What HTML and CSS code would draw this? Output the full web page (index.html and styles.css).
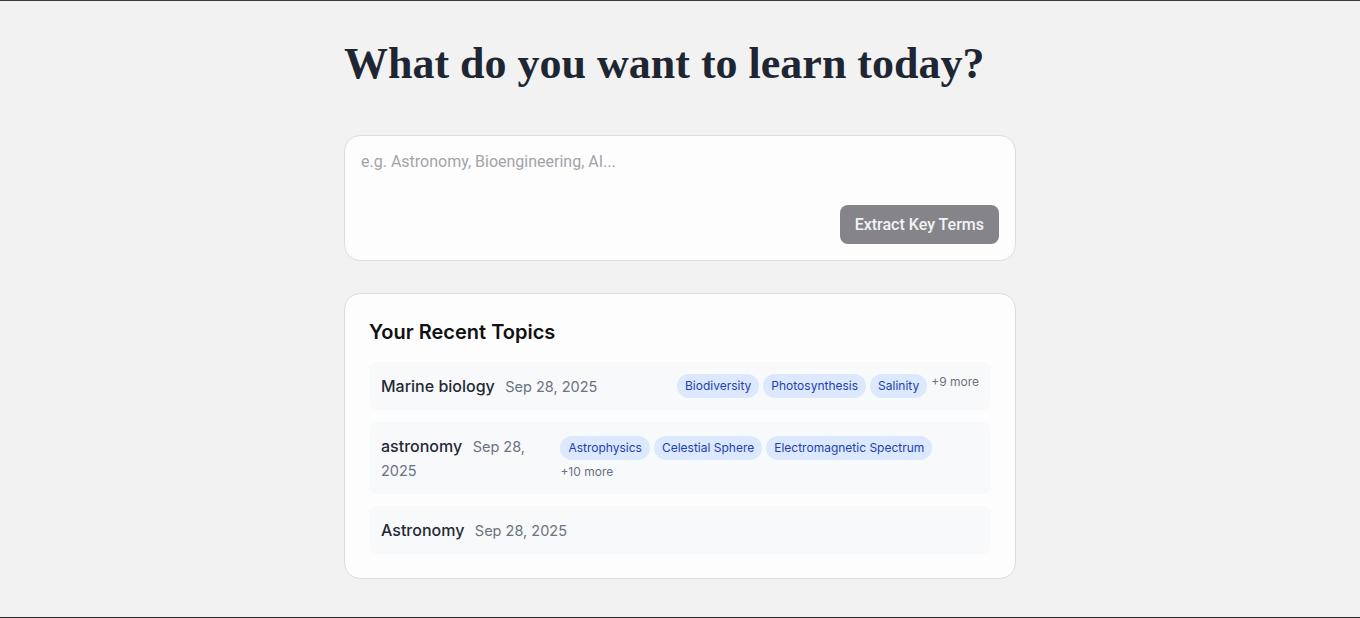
FILE: index.html
```html
<!DOCTYPE html>
<html lang="en">
<head>
    <meta charset="UTF-8">
    <meta name="viewport" content="width=device-width, initial-scale=1.0">
    <title>Learn</title>
    <link rel="stylesheet" href="styles.css">
</head>
<body>
    <main class="page">
        <h1 class="headline">What do you want to learn today?</h1>

        <div class="card search-card">
            <textarea class="topic-input" rows="2" placeholder="e.g. Astronomy, Bioengineering, AI..."></textarea>
            <div class="search-actions">
                <button type="button" class="extract-btn">Extract Key Terms</button>
            </div>
        </div>

        <section class="card recent-card">
            <h2 class="recent-title">Your Recent Topics</h2>
            <ul class="topic-list">
                <li class="topic-row">
                    <p class="topic-meta"><span class="topic-name">Marine biology</span> <span class="topic-date">Sep 28, 2025</span></p>
                    <div class="tags">
                        <span class="tag">Biodiversity</span>
                        <span class="tag">Photosynthesis</span>
                        <span class="tag">Salinity</span>
                        <span class="more">+9 more</span>
                    </div>
                </li>
                <li class="topic-row">
                    <p class="topic-meta"><span class="topic-name">astronomy</span> <span class="topic-date">Sep 28, 2025</span></p>
                    <div class="tags">
                        <span class="tag">Astrophysics</span>
                        <span class="tag">Celestial Sphere</span>
                        <span class="tag">Electromagnetic Spectrum</span>
                        <span class="more">+10 more</span>
                    </div>
                </li>
                <li class="topic-row">
                    <p class="topic-meta"><span class="topic-name">Astronomy</span> <span class="topic-date">Sep 28, 2025</span></p>
                </li>
            </ul>
        </section>
    </main>
</body>
</html>
```

FILE: styles.css
```css
* {
    box-sizing: border-box;
}

html,
body {
    margin: 0;
    padding: 0;
}

body {
    font-family: Inter, "Noto Sans", sans-serif;
    background: #f2f2f2;
    color: #1f2937;
    min-height: 100vh;
    border-top: 1px solid #3b3b3f;
    border-bottom: 1px solid #2a2a2a;
}

.page {
    width: 672px;
    margin: 0 auto;
    padding-top: 37px;
    display: flex;
    flex-direction: column;
    gap: 32px;
}

.headline {
    font-family: "Liberation Serif", "Times New Roman", serif;
    font-weight: 700;
    font-size: 44px;
    line-height: 1.2;
    color: #1f2633;
    margin: 0 0 12px;
}

.card {
    background: #fdfdfd;
    border: 1px solid #dcdcdc;
    border-radius: 16px;
}

.search-card {
    padding: 16px;
    display: flex;
    flex-direction: column;
}

.topic-input {
    border: none;
    outline: none;
    resize: none;
    background: transparent;
    font-family: Roboto, sans-serif;
    font-size: 16px;
    line-height: 20px;
    color: #374151;
    padding: 0;
    height: 53px;
}

.topic-input::placeholder {
    color: #a3a3ab;
}

.search-actions {
    display: flex;
    justify-content: flex-end;
}

.extract-btn {
    background: #858589;
    color: #f3f4f6;
    border: none;
    border-radius: 8px;
    height: 39px;
    padding: 0 15px;
    font-family: Roboto, sans-serif;
    font-size: 16px;
    font-weight: 500;
    cursor: pointer;
}

.recent-card {
    padding: 24px;
}

.recent-title {
    margin: 0 0 16px;
    font-size: 20px;
    line-height: 28px;
    font-weight: 600;
    color: #111111;
}

.topic-list {
    list-style: none;
    margin: 0;
    padding: 0;
    display: flex;
    flex-direction: column;
    gap: 12px;
}

.topic-row {
    background: #f8f9fb;
    border-radius: 8px;
    padding: 12px;
    display: flex;
    justify-content: space-between;
    align-items: center;
    gap: 16px;
}

.topic-meta {
    margin: 0;
    font-size: 16px;
    line-height: 24px;
}

.topic-name {
    font-weight: 500;
    color: #1f2937;
}

.topic-date {
    font-size: 14.5px;
    line-height: 16px;
    color: #6b7280;
    margin-left: 6px;
}

.tags {
    display: flex;
    flex-wrap: wrap;
    gap: 4px;
    flex-shrink: 0;
    max-width: 70%;
}

.tag {
    background: #dbe8fe;
    color: #1e3fae;
    font-size: 12px;
    line-height: 16px;
    padding: 4px 8px;
    border-radius: 999px;
}

.more {
    font-size: 12px;
    line-height: 16px;
    color: #6b7280;
}
```
